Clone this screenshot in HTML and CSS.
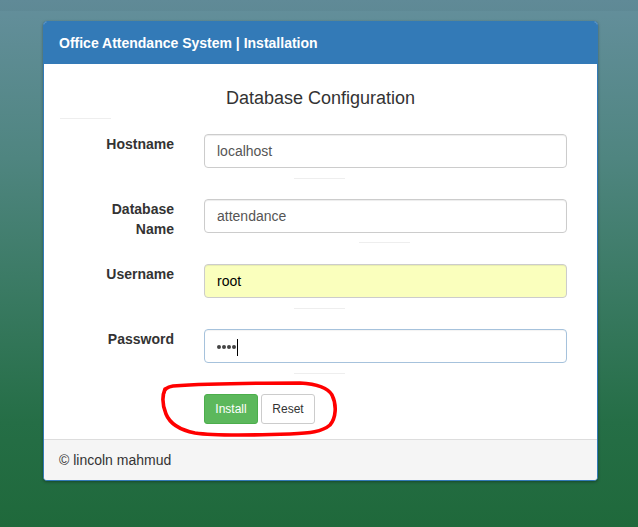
FILE: index.html
```html
<!DOCTYPE html>
<html>
<head>
<meta charset="utf-8">
<link rel="stylesheet" href="styles.css">
</head>
<body>
<div class="topstrip"></div>
<div class="panel">
  <div class="panel-heading">Office Attendance System | Installation</div>
  <div class="panel-body">
    <h4 class="title">Database Configuration</h4>
    <hr class="rule rule-first">
    <div class="row">
      <label class="lbl">Hostname</label>
      <div class="field">
        <input class="ctl" type="text" value="localhost">
        <hr class="rule rule-a">
      </div>
    </div>
    <div class="row">
      <label class="lbl">Database Name</label>
      <div class="field">
        <input class="ctl" type="text" value="attendance">
        <hr class="rule rule-b">
      </div>
    </div>
    <div class="row">
      <label class="lbl">Username</label>
      <div class="field">
        <input class="ctl autofill" type="text" value="root">
        <hr class="rule rule-a">
      </div>
    </div>
    <div class="row">
      <label class="lbl">Password</label>
      <div class="field">
        <div class="ctl focus"><span class="dots"><i></i><i></i><i></i><i></i></span><span class="caret"></span></div>
        <hr class="rule rule-a">
      </div>
    </div>
    <div class="row actions">
      <div class="lbl"></div>
      <div class="field btns">
        <button class="btn btn-success">Install</button>
        <button class="btn btn-default">Reset</button>
      </div>
    </div>
    <svg class="scribble" width="200" height="70" viewBox="150 375 200 70">
      <path d="M164 393 C164 389 167 387 173 386 C200 384 260 383 300 383 C318 384 328 388 332 395 C337 405 336 418 330 425 C322 432 310 433 290 434 C260 435 215 436 195 433 C180 430 170 424 166 414 C162 404 162 396 165 389" fill="none" stroke="#ff0000" stroke-width="3.6" stroke-linecap="round" stroke-linejoin="round"/>
    </svg>
  </div>
  <div class="panel-footer">© lincoln mahmud</div>
</div>
</body>
</html>
```
FILE: styles.css
```css
html, body {
  margin: 0;
  padding: 0;
}
body {
  width: 638px;
  height: 527px;
  overflow: hidden;
  background: linear-gradient(to bottom, #648f9c 0%, #4f8580 30%, #3a7a63 55%, #256e46 80%, #1f693b 100%);
  font-family: "Liberation Sans", Arial, sans-serif;
  font-size: 14px;
  color: #333;
}
.topstrip {
  height: 11px;
  background: rgba(0, 0, 0, 0.03);
  margin-bottom: 10px;
}
.panel {
  width: 553px;
  margin-left: 43px;
  border: 1px solid #337ab7;
  border-radius: 4px;
  background: #fff;
  box-shadow: 0 1px 3px rgba(0, 0, 0, 0.35);
  overflow: hidden;
}
.panel-heading {
  background: #337ab7;
  color: #fff;
  font-weight: bold;
  font-size: 14px;
  height: 42px;
  line-height: 42px;
  padding: 0 15px;
}
.panel-body {
  position: relative;
  padding: 15px 15px 15px 15px;
}
.title {
  margin: 9px 0 0 0;
  text-align: center;
  font-size: 18px;
  font-weight: normal;
  line-height: 20px;
  color: #333;
}
.rule {
  height: 0;
  border: 0;
  border-top: 1px solid #eee;
  width: 51px;
  margin: 0;
}
.rule-first {
  margin: 10px 0 15px 1px;
}
.rule-a {
  margin: 10px 0 20px 90px;
}
.rule-b {
  margin: 9px 0 21px 155px;
}
.row {
  display: flex;
}
.lbl {
  width: 85px;
  margin-left: 30px;
  text-align: right;
  font-weight: bold;
  padding-top: 0;
  line-height: 20px;
  color: #333;
}
.field {
  margin-left: 30px;
  width: 363px;
}
.ctl {
  display: flex;
  align-items: center;
  box-sizing: border-box;
  width: 363px;
  height: 34px;
  padding: 6px 12px;
  border: 1px solid #ccc;
  border-radius: 4px;
  font-family: "Liberation Sans", Arial, sans-serif;
  font-size: 14px;
  color: #555;
  background: #fff;
  box-shadow: inset 0 1px 1px rgba(0, 0, 0, 0.075);
  outline: none;
}
.autofill {
  background: #faffbd;
  color: #000;
}
.focus {
  border-color: #a6c2dc;
  box-shadow: inset 0 1px 1px rgba(0, 0, 0, 0.05);
}
.dots {
  display: flex;
  gap: 1px;
  padding-top: 2px;
}
.dots i {
  display: block;
  width: 4px;
  height: 4px;
  border-radius: 50%;
  background: #444;
}
.caret {
  display: inline-block;
  width: 1px;
  height: 17px;
  background: #000;
  margin-left: 1px;
  margin-top: 2px;
}
.btns {
  display: flex;
  gap: 3px;
}
.btn {
  box-sizing: border-box;
  height: 30px;
  padding: 0 10px;
  font-family: "Liberation Sans", Arial, sans-serif;
  font-size: 12px;
  border-radius: 3px;
  border: 1px solid #ccc;
  cursor: pointer;
}
.btn-success {
  width: 54px;
  background: #5cb85c;
  border-color: #4cae4c;
  color: #fff;
}
.btn-default {
  width: 54px;
  background: #fff;
  color: #333;
}
.scribble {
  position: absolute;
  left: 106px;
  top: 311px;
  pointer-events: none;
}
.panel-footer {
  background: #f5f5f5;
  border-top: 1px solid #ddd;
  height: 40px;
  line-height: 40px;
  padding: 0 15px;
  color: #333;
}
```
